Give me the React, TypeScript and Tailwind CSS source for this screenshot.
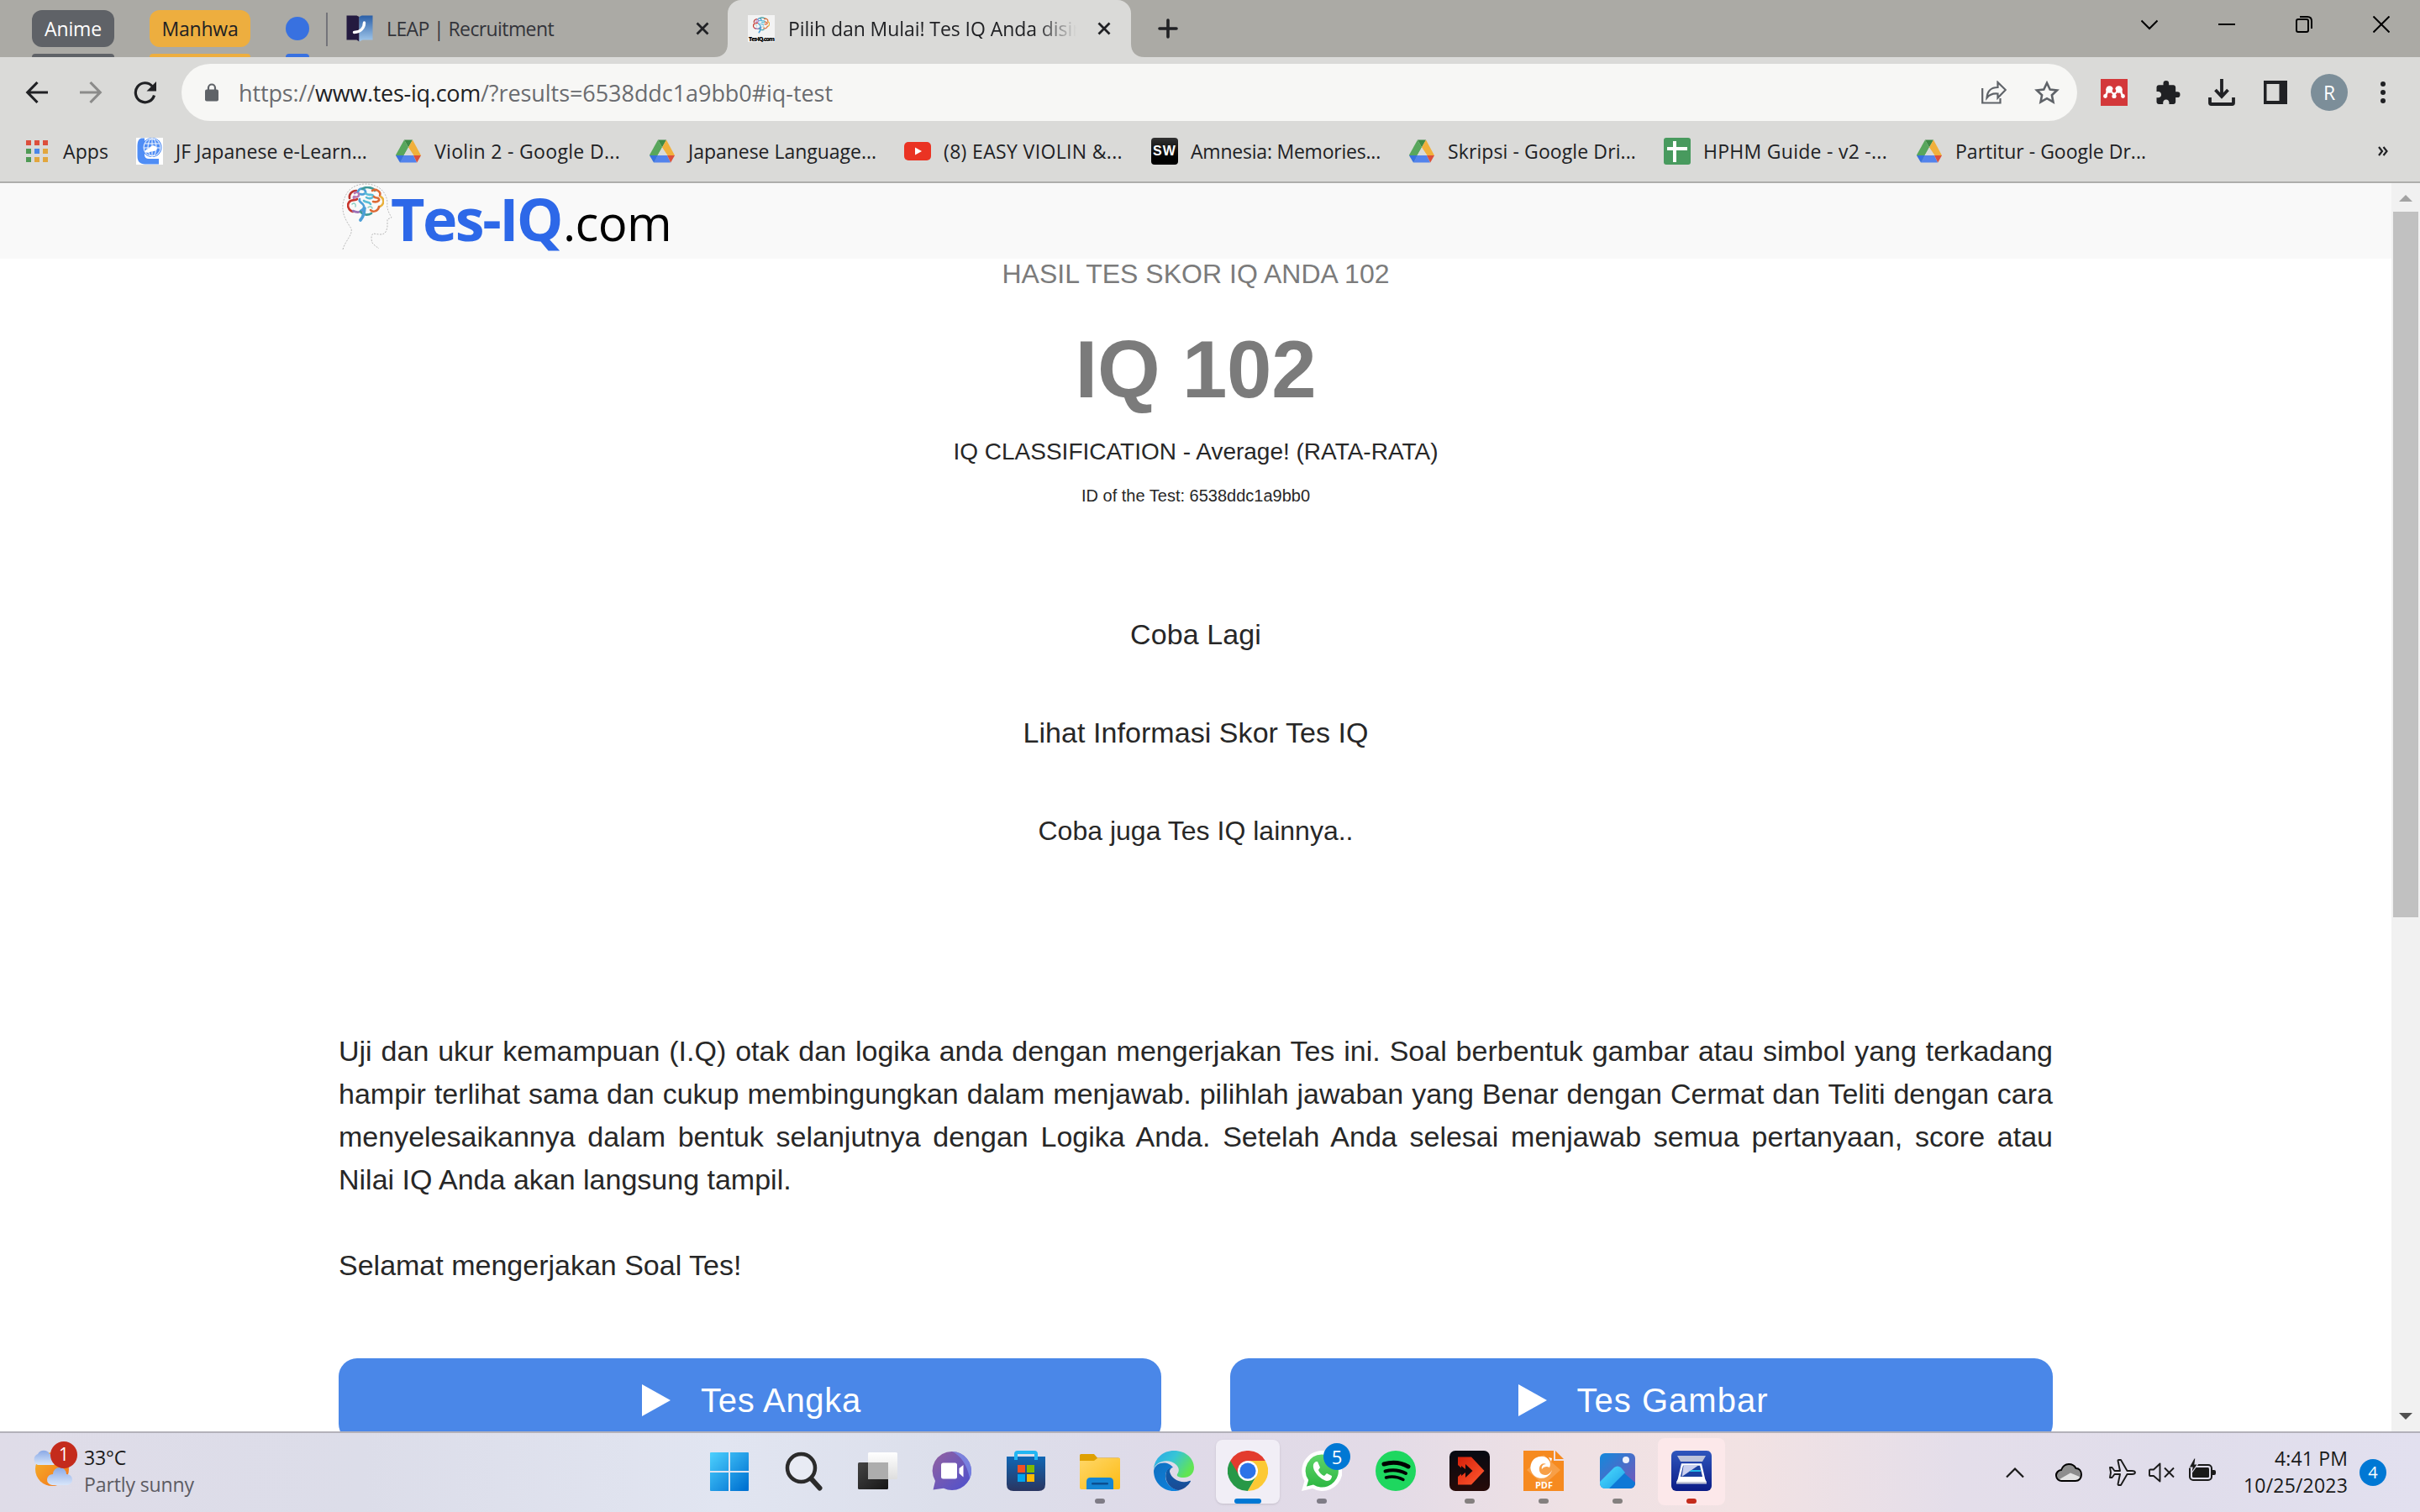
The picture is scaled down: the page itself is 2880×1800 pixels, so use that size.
import { useLayoutEffect, useRef, type ReactNode } from "react";

/* Text whose tracking is adjusted so that it spans a given width. */
function Fit({ w, className = "", children }: { w: number; className?: string; children: ReactNode }) {
  const ref = useRef<HTMLSpanElement>(null);
  useLayoutEffect(() => {
    const el = ref.current;
    if (!el) return;
    el.style.letterSpacing = "0px";
    const natural = el.getBoundingClientRect().width;
    const n = (el.textContent || "").length || 1;
    el.style.letterSpacing = `${(w - natural) / n}px`;
  }, [w]);
  return (
    <span ref={ref} className={`inline-block shrink-0 whitespace-pre ${className}`}>
      {children}
    </span>
  );
}

/* ---------- small icons ---------- */

function DriveIcon() {
  return (
    <svg viewBox="0 0 30 28" className="h-7 w-[30px]">
      <path d="M10 0.5h10l-5 9z" fill="#3f8a45" />
      <path d="M10 0.5l5 9L5.5 27 0 18.5z" fill="#58a65c" />
      <path d="M20 0.5l-5 9 6.5 9.5H30z" fill="#f1b03b" />
      <path d="M9.5 19h11.5l4 8.5H5z" fill="#5383ec" />
      <path d="M0 19h9.5L5 27.5z" fill="#3871e0" />
      <path d="M21 19h9l-4.800 8.500z" fill="#dc4f3c" />
      <path d="M15 9.500L9.500 19H21z" fill="#dadad8" />
    </svg>
  );
}

function AppsIcon() {
  const c = ["#dc4f3c", "#dc4f3c", "#dc4f3c", "#4f9a55", "#4a87e8", "#e2a63d", "#4f9a55", "#e2a63d", "#e2a63d"];
  return (
    <div className="grid grid-cols-3 gap-x-1 gap-y-1">
      {c.map((f, i) => (
        <svg key={i} viewBox="0 0 6 6" className="h-1.5 w-1.5">
          <rect width="6" height="6" fill={f} />
        </svg>
      ))}
    </div>
  );
}

function JfIcon() {
  return (
    <svg viewBox="0 0 32 32" className="h-8 w-8">
      <rect width="32" height="32" fill="#fff" />
      <path d="M10 0.500h-4C2 2 1.500 6 1.500 12v10c0 6 3 9.500 9 9.500h16.500v-6.500H15c-3 0-4.500-1.500-5-4z" fill="#4f8df5" />
      <ellipse cx="19" cy="11.500" rx="11.500" ry="11.500" fill="#4f8df5" />
      <g fill="none" stroke="#fff" strokeWidth="1">
        <ellipse cx="19" cy="11.500" rx="10" ry="10.500" />
        <ellipse cx="19" cy="11.500" rx="5" ry="10.500" />
        <path d="M19 1v20M10 7h18M9 12h20" />
      </g>
      <path d="M10 17c1-4 4-3 6-5 2-3 5-4 8-1 2 2 0 5-3 5-4 0-6 3-11 1z" fill="#fff" />
    </svg>
  );
}

function YoutubeIcon() {
  return (
    <svg viewBox="0 0 32 22" className="h-[22px] w-8">
      <rect width="32" height="22" rx="5" fill="#ea3323" />
      <path d="M13 6.500v9l8-4.500z" fill="#fff" />
    </svg>
  );
}

function SwIcon() {
  return (
    <div className="flex h-8 w-8 items-center justify-center rounded bg-gradient-to-b from-[#333] to-black">
      <Fit w={28} className="font-['Liberation_Sans'] text-[16px] leading-none font-bold text-white">SW</Fit>
    </div>
  );
}

function SheetIcon() {
  return (
    <svg viewBox="0 0 32 32" className="h-8 w-8">
      <rect width="32" height="32" rx="3" fill="#489a5e" />
      <path d="M4 13h24M13 4v25" stroke="#fff" strokeWidth="4" />
    </svg>
  );
}

function LeapIcon() {
  return (
    <svg viewBox="0 0 32 32" className="h-8 w-8">
      <defs>
        <linearGradient id="leap" x1="0" y1="0" x2="0" y2="1">
          <stop offset="0" stopColor="#2a5fa8" />
          <stop offset="1" stopColor="#a3c9ec" />
        </linearGradient>
      </defs>
      <path d="M0.500 0.500h12l3 1.500v29.500l-3-2H0.500z" fill="#241a40" />
      <path d="M15.500 2l3-1.500h13V29.500h-12l-4 2z" fill="url(#leap)" />
      <path d="M21.500 9c0 6-4 11-12 11.500" fill="none" stroke="#fff" strokeWidth="3.400" strokeLinecap="round" />
    </svg>
  );
}

function Brain({ className }: { className: string }) {
  return (
    <svg viewBox="0 0 44 42" className={className} fill="none" strokeWidth="2.600" strokeLinecap="round">
      <path d="M3 14C2 9 6 5 11 5" stroke="#b9332d" />
      <path d="M3 18c-4 4-1 11 4 12" stroke="#c9352c" />
      <path d="M3 18c3-3 7-1 9-3" stroke="#c9352c" />
      <path d="M9 8c4-4 7 2 4 4s-6-2-5 2" stroke="#b678b4" />
      <path d="M7 29c4 2 8 2 11 0" stroke="#9a6fb5" />
      <path d="M13 6c3-6 8-3 9 0s-4 4-6 3" stroke="#4d9fd8" />
      <path d="M18 3c5-4 14-1 15 2" stroke="#3f9a9a" />
      <path d="M22 8c3 4 8 0 9 3s-5 4-8 2" stroke="#59bcd6" />
      <path d="M30 5c4-3 11 1 9 6" stroke="#dd6a35" />
      <path d="M32 12c2 3 5 0 6 3s-4 4-7 3" stroke="#dd6a35" />
      <path d="M40 12c5 3 4 10-1 12" stroke="#e9b03a" />
      <path d="M38 24c-1 6-8 7-10 4" stroke="#dd6a35" />
      <path d="M15 15c-2 4 4 4 5 8s-2 5-4 6" stroke="#4d9fd8" />
      <path d="M20 17c3 3 6 0 8 4" stroke="#59bcd6" />
      <path d="M16 30c4 5 10 4 13 2" stroke="#3f9a9a" />
      <path d="M21 26c-1 5 0 8-5 14" stroke="#4d9fd8" strokeWidth="3.600" />
      <path d="M6 21c3-3 5 1 4 3M25 25c2-2 5-1 5 1" stroke="#8ccfc4" strokeWidth="1.500" />
    </svg>
  );
}

function TesIcon() {
  return (
    <div className="flex h-8 w-8 flex-col items-center bg-[#f3f3f3]">
      <Brain className="mt-0.5 h-5 w-5" />
      <Fit w={30} className="mt-auto font-['Open_Sans'] text-[7px] leading-[7px] font-extrabold text-black">Tes-IQ.com</Fit>
    </div>
  );
}

function CloseSmall() {
  return (
    <svg viewBox="0 0 16 16" className="h-4 w-4" stroke="#202124" strokeWidth="2.800">
      <path d="M1.500 1.500l13 13M14.500 1.500l-13 13" />
    </svg>
  );
}

/* ---------- browser chrome ---------- */

function TabStrip() {
  return (
    <div className="flex h-[68px] bg-[#abaaa5] pl-[38px] text-[23px] leading-none text-[#202124]">
      <div className="flex w-[98px] flex-col justify-between pt-3">
        <div className="flex h-11 items-center justify-center rounded-[12px] bg-[#5f6267] text-white">
          <Fit w={68}>Anime</Fit>
        </div>
        <div className="h-1 rounded-t bg-[#5f6267]" />
      </div>
      <div className="ml-[42px] flex w-[120px] flex-col justify-between pt-3">
        <div className="flex h-11 items-center justify-center rounded-[12px] bg-[#edae3f]">
          <Fit w={91}>Manhwa</Fit>
        </div>
        <div className="h-1 rounded-t bg-[#edae3f]" />
      </div>
      <div className="ml-[42px] flex w-7 flex-col justify-between pt-5">
        <div className="h-7 rounded-full bg-[#3871e0]" />
        <div className="h-1 rounded-t bg-[#3871e0]" />
      </div>
      <div className="mt-[15px] ml-5 h-10 w-0.5 bg-[#74747a]" />
      <div className="ml-[22px] flex h-[68px] w-[438px] items-center">
        <LeapIcon />
        <Fit w={199} className="ml-4 text-[#33343a]">LEAP | Recruitment</Fit>
        <div className="mr-[6px] ml-auto">
          <CloseSmall />
        </div>
      </div>
      <svg viewBox="0 0 16 16" className="h-4 w-4 self-end">
        <path d="M16 0v16H0C10 16 16 10 16 0z" fill="#dadad8" />
      </svg>
      <div className="flex w-[480px] items-center rounded-t-[16px] bg-[#dadad8] pr-6 pl-6">
        <TesIcon />
        <div className="ml-4 w-[343px] overflow-hidden [mask-image:linear-gradient(to_right,black_86%,transparent)]">
          <Fit w={358}>Pilih dan Mulai! Tes IQ Anda disini</Fit>
        </div>
        <div className="ml-auto">
          <CloseSmall />
        </div>
      </div>
      <svg viewBox="0 0 16 16" className="h-4 w-4 self-end">
        <path d="M0 0v16h16C6 16 0 10 0 0z" fill="#dadad8" />
      </svg>
      <svg viewBox="0 0 24 24" className="mt-[22px] ml-4 h-6 w-6" stroke="#202124" strokeWidth="3.600" strokeLinecap="round">
        <path d="M12 2v20M2 12h20" />
      </svg>
      <div className="mt-[19px] mr-[36px] ml-auto flex gap-[72px]">
        {["M0.500 5.500l9.500 9.500 9.500-9.500", "M0 10h20", "M1 6q0-2 2-2h10q2 0 2 2v11q0 2-2 2h-10q-2 0-2-2zM5 1h9q5 0 5 5v9", "M0.500 0.500l19 19M19.500 0.500l-19 19"].map((d) => (
          <svg key={d} viewBox="0 0 20 20" className="h-5 w-5" fill="none" stroke="#000" strokeWidth="2">
            <path d={d} />
          </svg>
        ))}
      </div>
    </div>
  );
}

function Toolbar() {
  return (
    <div className="flex h-[76px] items-center bg-[#dadad8] pt-2 pl-[30px] text-[#202124]">
      <svg viewBox="0 0 28 28" className="h-7 w-7" fill="none" stroke="#202124" strokeWidth="3.200">
        <path d="M14.500 2L2.800 14l11.700 12M3 14h24" />
      </svg>
      <svg viewBox="0 0 28 28" className="ml-9 h-7 w-7" fill="none" stroke="#8b8b8a" strokeWidth="3.200">
        <path d="M13.500 2l11.700 12-11.700 12M25 14H1" />
      </svg>
      <svg viewBox="0 0 28 28" className="ml-9 h-7 w-7" fill="none">
        <path d="M25.500 17.500A11.300 11.500 0 1 1 23 6.500" stroke="#202124" strokeWidth="3.200" />
        <path d="M28 1v11.500H16.500z" fill="#202124" />
      </svg>
      <div className="ml-[30px] flex h-[68px] w-[2256px] items-center rounded-full bg-[#f7f7f5] pl-7 text-[27px]">
        <svg viewBox="0 0 16 22" className="h-[22px] w-4">
          <path d="M4 9V5.500a4 4 0 0 1 8 0V9" fill="none" stroke="#5f6368" strokeWidth="2.200" />
          <rect x="0" y="7.500" width="16" height="14" rx="2" fill="#5f6368" />
        </svg>
        <div className="ml-6 flex leading-none text-[#6a6c70]">
          <Fit w={91}>https://</Fit>
          <Fit w={197} className="text-[#202124]">www.tes-iq.com</Fit>
          <Fit w={419}>/?results=6538ddc1a9bb0#iq-test</Fit>
        </div>
        <svg viewBox="0 0 30 28" className="ml-auto h-7 w-[30px]" fill="none" stroke="#5f6368" strokeWidth="2.200">
          <path d="M1.200 9v17.500H22.500V21" />
          <path d="M19.500 2v6C10 8 7 14 6.500 20.500 10 16 14 15 19.500 15.500V20.500L28.800 11z" />
        </svg>
        <svg viewBox="0 0 30 28" className="mr-[21px] ml-[33px] h-7 w-[30px]" fill="none" stroke="#5f6368" strokeWidth="2.600">
          <path d="M15 2.800l3.700 7.700 8.300 1-6.100 5.700 1.600 8.200-7.500-4.200-7.500 4.200 1.600-8.200L3 11.500l8.300-1z" />
        </svg>
      </div>
      <svg viewBox="0 0 32 32" className="ml-7 h-8 w-8">
        <rect width="32" height="32" fill="#d3383a" />
        <g fill="#fff">
          <circle cx="10.500" cy="12.500" r="4.300" />
          <circle cx="21.500" cy="12.500" r="4.300" />
          <circle cx="5.500" cy="20.500" r="2.400" />
          <circle cx="16" cy="20.500" r="2.600" />
          <circle cx="26.500" cy="20.500" r="2.400" />
        </g>
        <path d="M8 12c0 4-.500 6-2.500 8M24 12c0 4 .500 6 2.500 8M13 13c0 4 3 4 3 7 0-3 3-3 3-7" stroke="#fff" strokeWidth="2.600" fill="none" />
        <circle cx="16" cy="14" r="2.300" fill="#d3383a" />
      </svg>
      <svg viewBox="2 1 21 21" className="ml-[34px] h-7 w-[29px]">
        <path fill="#202124" d="M20.500 11H19V7c0-1.100-.9-2-2-2h-4V3.500a2.500 2.500 0 0 0-5 0V5H4c-1.100 0-1.990.9-1.990 2v3.800H3.500c1.490 0 2.700 1.210 2.700 2.700s-1.210 2.700-2.700 2.700H2V20c0 1.100.9 2 2 2h3.800v-1.500c0-1.490 1.210-2.700 2.700-2.700s2.700 1.210 2.700 2.700V22H17c1.100 0 2-.9 2-2v-4h1.500a2.500 2.500 0 0 0 0-5z" />
      </svg>
      <svg viewBox="0 0 32 32" className="ml-[33px] h-8 w-8" fill="none" stroke="#202124" strokeWidth="3.800">
        <path d="M16 0v19" />
        <path d="M8.500 13l7.500 8 7.500-8" />
        <path d="M2 22v6.500q0 1.500 1.500 1.500h25q1.500 0 1.500-1.500V22" />
      </svg>
      <svg viewBox="0 0 28 28" className="ml-[34px] h-7 w-7">
        <rect width="28" height="28" fill="#202124" />
        <rect x="3.500" y="4" width="15" height="20" fill="#dadad8" />
      </svg>
      <div className="ml-7 flex h-11 w-11 items-center justify-center rounded-full bg-[#7c8e99] text-[23px] leading-none text-white">R</div>
      <div className="ml-[39px] flex flex-col gap-1">
        <div className="h-1.5 w-1.5 rounded-full bg-[#202124]" />
        <div className="h-1.5 w-1.5 rounded-full bg-[#202124]" />
        <div className="h-1.5 w-1.5 rounded-full bg-[#202124]" />
      </div>
    </div>
  );
}

const bookmarks: { icon: ReactNode; label: string; w: number; box: string }[] = [
  { icon: <AppsIcon />, label: "Apps", w: 54, box: "w-[134px]" },
  { icon: <JfIcon />, label: "JF Japanese e-Learn...", w: 228, box: "w-[308px]" },
  { icon: <DriveIcon />, label: "Violin 2 - Google D...", w: 221, box: "w-[302px]" },
  { icon: <DriveIcon />, label: "Japanese Language...", w: 224, box: "w-[304px]" },
  { icon: <YoutubeIcon />, label: "(8) EASY VIOLIN &...", w: 213, box: "w-[294px]" },
  { icon: <SwIcon />, label: "Amnesia: Memories...", w: 226, box: "w-[306px]" },
  { icon: <DriveIcon />, label: "Skripsi - Google Dri...", w: 224, box: "w-[304px]" },
  { icon: <SheetIcon />, label: "HPHM Guide - v2 -...", w: 219, box: "w-[300px]" },
  { icon: <DriveIcon />, label: "Partitur - Google Dr...", w: 227, box: "w-[300px]" },
];

function BookmarksBar() {
  return (
    <div className="flex h-[74px] items-center border-b-2 border-[#aeaeac] bg-[#dadad8] pl-7 text-[23px] leading-none text-[#202124]">
      {bookmarks.map((b) => (
        <div key={b.label} className={`flex items-center gap-4 ${b.box}`}>
          <div className="flex w-8 justify-center">{b.icon}</div>
          <Fit w={b.w} className="-ml-px">{b.label}</Fit>
        </div>
      ))}
      <svg viewBox="0 0 12 12" className="mr-[38px] ml-auto h-3 w-3" fill="none" stroke="#202124" strokeWidth="2.200">
        <path d="M1 1l4 5-4 5M6.500 1l4 5-4 5" />
      </svg>
    </div>
  );
}

/* ---------- page ---------- */

function Logo() {
  return (
    <div className="flex h-[90px] pl-1">
      <svg viewBox="0 0 60 80" className="h-20 w-[60px]" fill="none">
        <path
          d="M1 79C4 68 13 62 11 54 4 44 0 36 1 25 4 8 15 1 28 1c16 0 25 10 26 22-1 7 1 11 5 18l-5 2 0 9c-2 10-5 10-17 8-3 3-2 8-1 11 3 4 6 5 8 7"
          stroke="#b9b9b9"
          strokeWidth="1"
          strokeDasharray="2 1.500"
        />
        <svg x="6" y="4" width="44" height="42">
          <Brain className="h-[42px] w-11" />
        </svg>
      </svg>
      <div className="-ml-0.5 flex items-baseline">
        <Fit w={203} className="text-[70px] leading-[84px] font-bold text-[#2d68e8]">Tes-IQ</Fit>
        <Fit w={129} className="ml-0.5 text-[58px] leading-[84px] text-black">.com</Fit>
      </div>
    </div>
  );
}

function TestButton({ label, w }: { label: string; w: number }) {
  return (
    <div className="flex h-[100px] w-[979px] items-center justify-center rounded-[22px] bg-[#4a87e8] pl-1 text-[40px] leading-none text-white">
      <svg viewBox="0 0 34 38" className="mr-9 h-[38px] w-[34px]">
        <path d="M0 0l34 19L0 38z" fill="#fff" />
      </svg>
      <Fit w={w}>{label}</Fit>
    </div>
  );
}

function Page() {
  return (
    <div className="flex h-[1486px] overflow-hidden bg-white">
      <div className="w-[2846px] font-['Liberation_Sans',Arial,sans-serif] text-[#272727]">
        <div className="h-[90px] bg-[#f9f9f9] pl-[403px] font-['Open_Sans']">
          <Logo />
        </div>
        <div className="mx-auto flex w-[2040px] flex-col items-center">
          <div className="text-[32px] leading-9 text-[#7b7b7b]"><Fit w={461}>HASIL TES SKOR IQ ANDA 102</Fit></div>
          <div className="mt-10 text-[96px] leading-[112px] font-bold text-[#7b7b7b]"><Fit w={287}>IQ 102</Fit></div>
          <div className="mt-[22px] text-[28px] leading-10"><Fit w={577}>IQ CLASSIFICATION - Average! (RATA-RATA)</Fit></div>
          <div className="mt-5 text-[20px] leading-6"><Fit w={272}>ID of the Test: 6538ddc1a9bb0</Fit></div>
          <div className="mt-32 text-[34px] leading-[51px]"><Fit w={156}>Coba Lagi</Fit></div>
          <div className="mt-[66px] text-[34px] leading-[51px]"><Fit w={411}>Lihat Informasi Skor Tes IQ</Fit></div>
          <div className="mt-[66px] text-[32px] leading-[51px]"><Fit w={375}>Coba juga Tes IQ lainnya..</Fit></div>
          <p className="mt-[211px] w-full text-justify text-[34px] leading-[51px]">
            Uji dan ukur kemampuan (I.Q) otak dan logika anda dengan mengerjakan Tes ini. Soal berbentuk gambar atau simbol yang terkadang hampir terlihat sama dan cukup membingungkan dalam menjawab. pilihlah jawaban yang Benar dengan Cermat dan Teliti dengan cara menyelesaikannya dalam bentuk selanjutnya dengan Logika Anda. Setelah Anda selesai menjawab semua pertanyaan, score atau Nilai IQ Anda akan langsung tampil.
            <br />
            <br />
            Selamat mengerjakan Soal Tes!
          </p>
          <div className="mt-[85px] flex w-full justify-between">
            <TestButton label="Tes Angka" w={191} />
            <TestButton label="Tes Gambar" w={228} />
          </div>
        </div>
      </div>
      <div className="flex w-[34px] flex-col items-center bg-[#f1f1f1]">
        <svg viewBox="0 0 16 8" className="mt-[14px] h-2 w-4">
          <path d="M0 8L8 0l8 8z" fill="#a3a3a3" />
        </svg>
        <div className="mt-3 h-[840px] w-[30px] bg-[#c1c1c1]" />
        <svg viewBox="0 0 16 8" className="mt-auto mb-[14px] h-2 w-4">
          <path d="M0 0l8 8 8-8z" fill="#505050" />
        </svg>
      </div>
    </div>
  );
}

/* ---------- taskbar ---------- */

function Grad({ id, a, b, diagonal = true }: { id: string; a: string; b: string; diagonal?: boolean }) {
  return (
    <linearGradient id={id} x1="0" y1="0" x2={diagonal ? "1" : "0"} y2="1">
      <stop offset="0" stopColor={a} />
      <stop offset="1" stopColor={b} />
    </linearGradient>
  );
}

const S = "h-12 w-12";

const apps: { name: string; dot?: string; tile?: string; badge?: string; icon: ReactNode }[] = [
  {
    name: "start",
    icon: (
      <svg viewBox="0 0 48 48" className={S}>
        <defs>
          <linearGradient id="win" gradientUnits="userSpaceOnUse" x1="0" y1="0" x2="44" y2="44">
            <stop offset="0" stopColor="#4fd3ff" />
            <stop offset="1" stopColor="#0072d2" />
          </linearGradient>
        </defs>
        <path fill="url(#win)" d="M1 2h21v22H0V3q0-1 1-1zM24 2h21q1 0 1 1v21H24zM0 26h22v22H1q-1 0-1-1zM24 26h22v21q0 1-1 1H24z" />
      </svg>
    ),
  },
  {
    name: "search",
    icon: (
      <svg viewBox="0 0 48 48" className={S} fill="none" stroke="#2b2b2b">
        <circle cx="20.500" cy="20.500" r="16.500" strokeWidth="4.500" fill="#fff" fillOpacity="0.3" />
        <path d="M33 34l9.500 10.500" strokeWidth="6" strokeLinecap="round" />
      </svg>
    ),
  },
  {
    name: "taskview",
    icon: (
      <svg viewBox="0 0 48 48" className={S}>
        <defs><Grad id="tv" a="#444" b="#161616" /><Grad id="tv2" a="#fff" b="#dedede" diagonal={false} /></defs>
        <rect x="0" y="14" width="36" height="32" rx="1.500" fill="url(#tv)" />
        <rect x="12" y="2" width="35" height="32" rx="1.500" fill="url(#tv2)" />
        <rect x="12" y="14" width="24" height="20" fill="#adadad" />
      </svg>
    ),
  },
  {
    name: "chat",
    icon: (
      <svg viewBox="0 0 48 48" className={S}>
        <defs><Grad id="chat" a="#94619f" b="#4b50cf" /></defs>
        <path d="M24 1a23 23 0 1 1-10 43.700L1.500 46.500 4 36A23 23 0 0 1 24 1z" fill="url(#chat)" />
        <path d="M24 1a23 23 0 0 1 23 23q0 5-2 9C42 16 34 6 24 1z" fill="#7f93ee" fillOpacity="0.7" />
        <rect x="11" y="14.500" width="19" height="19" rx="2.500" fill="#fff" />
        <path d="M37.500 17v14.500l-5-4.500v-6z" fill="#fff" />
      </svg>
    ),
  },
  {
    name: "store",
    icon: (
      <svg viewBox="0 0 48 48" className={S}>
        <defs><Grad id="st" a="#1067b5" b="#2a3560" diagonal={false} /></defs>
        <path d="M1 7h46v33q0 8-8 8H9q-8 0-8-8z" fill="url(#st)" />
        <path d="M12 11V4q0-2 2-2h20q2 0 2 2v7" fill="none" stroke="#22b5f2" strokeWidth="4" />
        <path d="M14 17h9v9h-9z" fill="#f25022" />
        <path d="M25 17h9v9h-9z" fill="#7fba00" />
        <path d="M14 28h9v9h-9z" fill="#00a4ef" />
        <path d="M25 28h9v9h-9z" fill="#ffb900" />
      </svg>
    ),
  },
  {
    name: "explorer",
    dot: "w-3 bg-[#7f7c86]",
    icon: (
      <svg viewBox="0 0 48 48" className={S}>
        <defs><Grad id="fe" a="#ffd768" b="#fdbb14" /></defs>
        <path d="M0 5.500q0-1.500 1.500-1.500H17l4 4.500H46q2 0 2 2V20H0z" fill="#dfa000" />
        <path d="M0 12h17l4-3h27v35q0 2-2 2H2q-2 0-2-2z" fill="url(#fe)" />
        <path d="M8 46V37q0-5 5-5h22q5 0 5 5v9z" fill="#1585d3" />
        <rect x="14" y="38" width="20" height="2.400" rx="1.200" fill="#0b4f91" />
      </svg>
    ),
  },
  {
    name: "edge",
    icon: (
      <svg viewBox="0 0 48 48" className={S}>
        <defs>
          <linearGradient id="eg" x1="0" y1="0" x2="1" y2="0.5">
            <stop offset="0" stopColor="#2aa6e8" />
            <stop offset="0.5" stopColor="#37c5d6" />
            <stop offset="1" stopColor="#62e552" />
          </linearGradient>
          <Grad id="eb" a="#0f6fc0" b="#0d84e0" />
          <Grad id="ed" a="#0d5fae" b="#1b4a93" diagonal={false} />
        </defs>
        <path d="M0 24c0 14 11 24 24 24 3 0 5-.400 7-1C20 46 13 37 14 29c.500-5 4-9 9-9-5-8-21-8-23 4z" fill="url(#eb)" />
        <path d="M15 25c-3 9 3 20 14 22 6-.500 12-5 15-10.500 0-1-.500-1-1.500-.500C33 40 21 34 19 25c0-2 1-4 3-5-3 0-6 2-7 5z" fill="url(#ed)" />
        <path d="M0 22C1 9 11 0 24 0c15 0 24 10 24 20 0 8-6 12-12 12-7 0-9-2-8-4 3-4 2-8-1-11C20 9 3 11 0 22z" fill="url(#eg)" />
      </svg>
    ),
  },
  {
    name: "chrome",
    dot: "w-8 bg-[#0078d4]",
    tile: "h-[76px] w-[76px] rounded-lg bg-[#f1eef6] shadow",
    icon: (
      <svg viewBox="0 0 48 48" className={S}>
        <path d="M24 24L3.200 12A24 24 0 0 1 44.800 12z" fill="#e33b2e" />
        <path d="M3.200 12A24 24 0 0 0 24 48L34.400 30z" fill="#279847" />
        <path d="M44.800 12A24 24 0 0 1 24 48L34.400 30 24 12z" fill="#fcc934" />
        <path d="M3.200 12h20.800l-11 16z" fill="#e33b2e" />
        <circle cx="24" cy="24" r="12" fill="#fff" />
        <circle cx="24" cy="24" r="9.600" fill="#2c73e8" />
      </svg>
    ),
  },
  {
    name: "whatsapp",
    dot: "w-3 bg-[#7f7c86]",
    badge: "5",
    icon: (
      <svg viewBox="0 0 48 48" className={S}>
        <defs><Grad id="wa" a="#5fd56a" b="#2db742" diagonal={false} /></defs>
        <path d="M24 0a24 24 0 1 1-11 45L0 48l3.500-12A24 24 0 0 1 24 0z" fill="#fff" />
        <path d="M24 4.500a19.500 19.500 0 1 1-10 36L6 42.500 8.200 35A19.500 19.500 0 0 1 24 4.500z" fill="url(#wa)" />
        <path d="M17 13c-4 2-4 7-1 12s9 10 14 11c4 0 6-3 6-6l-6-3-3 3c-3-1-6-4-7-7l2-3-3-7z" fill="#fff" />
      </svg>
    ),
  },
  {
    name: "spotify",
    icon: (
      <svg viewBox="0 0 48 48" className={S}>
        <circle cx="24" cy="24" r="24" fill="#1ed75f" />
        <g fill="none" stroke="#000" strokeLinecap="round">
          <path d="M10 16c10-3 20-2 29 3" strokeWidth="5" />
          <path d="M11.500 24.500c9-2.500 17-1.500 24.500 2.500" strokeWidth="4" />
          <path d="M12.500 32c7-2 14-1 20.500 2.500" strokeWidth="3.400" />
        </g>
      </svg>
    ),
  },
  {
    name: "player",
    dot: "w-3 bg-[#84807f]",
    icon: (
      <svg viewBox="0 0 48 48" className={S}>
        <defs><Grad id="pb" a="#060a12" b="#270a08" diagonal={false} /><Grad id="pr" a="#d6200a" b="#ff5a30" /></defs>
        <rect width="48" height="48" rx="7" fill="url(#pb)" />
        <path d="M10 7.500h16L41.500 24 26 40.500H10V31l8-7-8-7z" fill="url(#pr)" />
        <path d="M19 16l8.500 8-8.500 8V26l-5 4V18l5 4z" fill="#12090c" />
      </svg>
    ),
  },
  {
    name: "pdf",
    dot: "w-3 bg-[#84807f]",
    icon: (
      <svg viewBox="0 0 48 48" className={S}>
        <path d="M0 0h36v12h12v36H0z" fill="#f68a1f" />
        <path d="M38 0l10 10H38z" fill="#f68a1f" />
        <path d="M24 5l20 18-20 18L4 23z" fill="#fff" fillOpacity="0.18" />
        <path d="M24 7a13 13 0 1 0 10 16c-2 4-5 6-8 6-5 0-8-4-7-9 1-4 5-6 8-4-4 0-6 3-5 6 2-3 6-4 9-2 3-6-2-12-7-13z" fill="#fff" />
        <path d="M30 8l4 1-1 4z" fill="#fff" />
        <text x="24.500" y="44.500" textAnchor="middle" fontFamily="Open Sans" fontWeight="700" fontSize="11" fill="#fff">PDF</text>
      </svg>
    ),
  },
  {
    name: "photos",
    dot: "w-3 bg-[#84807f]",
    icon: (
      <svg viewBox="0 0 48 48" className={S}>
        <defs>
          <Grad id="ph" a="#1389dc" b="#7a55b8" />
          <Grad id="pm" a="#4fe0ff" b="#1c9fe8" />
          <clipPath id="phc"><rect x="3" y="3" width="42" height="42" rx="6" /></clipPath>
        </defs>
        <g clipPath="url(#phc)">
          <rect x="3" y="3" width="42" height="42" fill="url(#ph)" />
          <path d="M31 26l14 12v7H10z" fill="#0f78d6" />
          <path d="M3 37l17-17q4-3 8 0l5 6L14 45H3z" fill="url(#pm)" />
        </g>
        <circle cx="34" cy="11" r="4" fill="#eef2fb" />
      </svg>
    ),
  },
  {
    name: "scanner",
    dot: "w-3 bg-[#c42b1c]",
    tile: "h-20 w-20 rounded-lg bg-[#fce8ea]",
    icon: (
      <svg viewBox="0 0 48 48" className={S}>
        <defs><Grad id="sc" a="#2f56bd" b="#0b1c86" diagonal={false} /></defs>
        <rect width="48" height="48" rx="6" fill="url(#sc)" />
        <path d="M7 6h34l-4 7H11z" fill="#bcc3da" />
        <path d="M13 16.500h22L39.500 36h-31z" fill="#1a3fa0" stroke="#fff" strokeWidth="2.500" />
        <path d="M14.500 18h17L12.500 31z" fill="#c9cfef" />
        <path d="M24 23h11v2H21z" fill="#22b9ea" />
        <path d="M10 31h28l4 6H6z" fill="#fff" />
        <path d="M6 37h36v2.500H6z" fill="#c5c9d8" />
      </svg>
    ),
  },
];

function Weather() {
  return (
    <div className="relative ml-[38px] h-[62px] w-16">
      <svg viewBox="0 0 54 54" className="mt-[5px] h-[54px] w-[54px]">
        <defs><Grad id="sun" a="#f4b52a" b="#f4701a" /><Grad id="cl" a="#8aa9e6" b="#d8e6fa" diagonal={false} /></defs>
        <circle cx="24" cy="28" r="20" fill="url(#sun)" />
        <path d="M7 23a7 7 0 0 1 0-13 8 8 0 0 1 14 0 7 7 0 0 1 5 13z" fill="url(#cl)" />
        <path d="M24 47a6.500 6.500 0 0 1 1-13 8 8 0 0 1 16 0 6.500 6.500 0 0 1 1 13z" fill="url(#cl)" />
      </svg>
      <div className="absolute top-0 left-[22px] flex h-8 w-8 items-center justify-center rounded-full bg-[#c42b1c] text-[21px] text-white">1</div>
    </div>
  );
}

function Tray() {
  return (
    <div className="flex h-[94px] items-center text-[#1a1a1a]">
      <svg viewBox="0 0 22 14" className="h-3.5 w-[22px]" fill="none" stroke="#1a1a1a" strokeWidth="2.200">
        <path d="M1 12.500l10-10 10 10" />
      </svg>
      <svg viewBox="0 0 32 24" className="ml-[37px] h-6 w-8">
        <path d="M8 22a6.500 6.500 0 0 1-1-13C9 4 12 2 16 2s7 2 8.500 5c4 0 6.500 3 6.500 7.500S28 22 24 22z" fill="#8d8d8d" />
        <path d="M5 20L18 12.500l12 5q-2 4-6 4.500H8z" fill="#e3e3e3" />
        <path d="M8 22a6.500 6.500 0 0 1-1-13C9 4 12 2 16 2s7 2 8.500 5c4 0 6.500 3 6.500 7.500S28 22 24 22z" fill="none" stroke="#000" strokeWidth="2" />
      </svg>
      <svg viewBox="0 0 32 32" className="ml-8 h-8 w-8" fill="none" stroke="#1a1a1a" strokeWidth="1.900" strokeLinejoin="round">
        <path d="M1 10h2.500l3 4H13L10.500 2q0-1 1-1H14l7.500 13H27q4 0 4 2t-4 2h-5.500L14 31h-2.500q-1 0-1-1L13 18H6.500l-3 4H1l1-6z" />
      </svg>
      <svg viewBox="0 0 32 24" className="ml-[15px] h-6 w-8" fill="none" stroke="#1a1a1a" strokeWidth="1.900" strokeLinejoin="round">
        <path d="M2 8.500h4L13.500 1.500v21L6 16H2q-1 0-1-1V9.500q0-1 1-1z" />
        <path d="M19 6.500l11 11M30 6.500l-11 11" />
      </svg>
      <svg viewBox="0 0 32 28" className="-mt-1.5 ml-4 h-7 w-8">
        <rect x="1" y="8" width="26" height="18" rx="4" fill="none" stroke="#1a1a1a" strokeWidth="2" />
        <rect x="4" y="11" width="20" height="12" rx="1.500" fill="#1a1a1a" />
        <path d="M28 14h2q2 0 2 2v2q0 2-2 2h-2z" fill="#1a1a1a" />
        <path d="M6 0L0 11h4L2.500 18.500 10.500 7H7l1-7z" fill="#1a1a1a" stroke="#e0ddeb" strokeWidth="1.200" />
      </svg>
      <div className="ml-[33px] flex w-[124px] flex-col items-end pb-[3px] text-[23px] leading-8">
        <Fit w={87}>4:41 PM</Fit>
        <Fit w={124}>10/25/2023</Fit>
      </div>
      <div className="mr-10 ml-[14px] flex h-8 w-8 items-center justify-center rounded-full bg-[#0078d4] text-[20px] text-white">4</div>
    </div>
  );
}

function Taskbar() {
  return (
    <div className="flex h-24 border-t-2 border-[#b3b1ba] bg-[linear-gradient(90deg,#dfdce8_0%,#dcdde9_15%,#e1e5f1_30%,#dcdfeb_39%,#dfdae8_49%,#e3dbe7_57%,#efe1e4_65%,#f2e2e3_72%,#e4deea_81%,#e0ddeb_90%,#e2e0ef_100%)]">
      <div className="flex w-[825px] pt-2.5">
        <Weather />
        <div className="-ml-0.5 flex flex-col pt-[3px] text-[23px] leading-8">
          <Fit w={50} className="self-start text-[#1a1a1a]">33°C</Fit>
          <Fit w={131} className="self-start text-[#5c5b62]">Partly sunny</Fit>
        </div>
      </div>
      {apps.map((a) => (
        <div key={a.name} className="relative flex w-[88px] items-center justify-center pb-1.5">
          {a.tile && (
            <div className="absolute inset-x-0 top-0 flex h-[92px] items-center justify-center">
              <div className={a.tile} />
            </div>
          )}
          <div className="relative mt-0.5">{a.icon}</div>
          {a.dot && <div className={`absolute bottom-2.5 h-1.5 rounded-full ${a.dot}`} />}
          {a.badge && (
            <div className="absolute top-3 right-[10px] flex h-8 w-8 items-center justify-center rounded-full bg-[#0078d4] text-[22px] text-white">{a.badge}</div>
          )}
        </div>
      ))}
      <div className="ml-auto">
        <Tray />
      </div>
    </div>
  );
}

export default function App() {
  return (
    <div className="h-[1800px] w-[2880px] overflow-hidden bg-white font-['Open_Sans',sans-serif]">
      <TabStrip />
      <Toolbar />
      <BookmarksBar />
      <Page />
      <Taskbar />
    </div>
  );
}
